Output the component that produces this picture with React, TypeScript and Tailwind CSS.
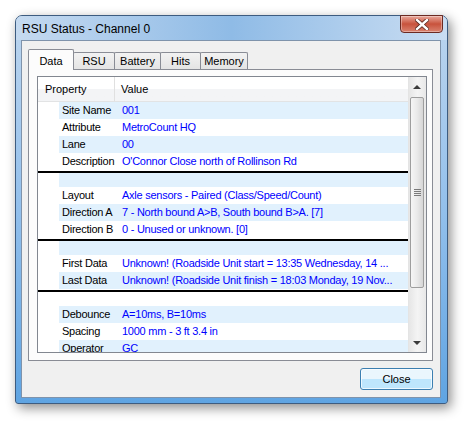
import React from "react";

type Row = { p?: string; v?: string; sep?: boolean };

const rows: Row[] = [
  { p: "Site Name", v: "001" },
  { p: "Attribute", v: "MetroCount HQ" },
  { p: "Lane", v: "00" },
  { p: "Description", v: "O'Connor Close north of Rollinson Rd" },
  { sep: true },
  { p: "Layout", v: "Axle sensors - Paired (Class/Speed/Count)" },
  { p: "Direction A", v: "7 - North bound A>B, South bound B>A. [7]" },
  { p: "Direction B", v: "0 - Unused or unknown. [0]" },
  { sep: true },
  { p: "First Data", v: "Unknown! (Roadside Unit start = 13:35 Wednesday, 14 ..." },
  { p: "Last Data", v: "Unknown! (Roadside Unit finish = 18:03 Monday, 19 Nov..." },
  { sep: true },
  { p: "Debounce", v: "A=10ms, B=10ms" },
  { p: "Spacing", v: "1000 mm - 3 ft 3.4 in" },
  { p: "Operator", v: "GC" },
];

const tabs = ["RSU", "Battery", "Hits", "Memory"];
const tabWidths = ["w-[42px]", "w-[47px]", "w-[41px]", "w-[48px]"];

function ListRow({ row, index }: { row: Row; index: number }) {
  const blue = index % 2 === 0 ? "bg-[#e1f1fd]" : "bg-white";
  if (row.sep) {
    return (
      <div className="flex h-[17px] shrink-0 flex-col bg-white">
        <div className="mt-[1px] h-[2px] w-full bg-black" />
        <div className="flex flex-1">
          <div className="w-[21px]" />
          <div className={`flex-1 ${blue}`} />
        </div>
      </div>
    );
  }
  return (
    <div className="flex h-[17px] shrink-0 bg-white tracking-[-0.25px]">
      <div className="w-[21px]" />
      <div className={`flex flex-1 items-center ${blue}`}>
        <div className="w-[56px] whitespace-nowrap pl-[3px] text-black">{row.p}</div>
        <div className="flex-1 overflow-hidden whitespace-nowrap pl-[7px] text-[#0000ff]">{row.v}</div>
      </div>
    </div>
  );
}

function ScrollBar() {
  return (
    <div className="flex w-[18px] flex-col border-l border-[#e4e4e4] bg-gradient-to-r from-[#e6e6e6] via-[#f4f4f4] to-[#e8e8e8] py-[1px] pr-[1px]">
      <div className="flex h-[17px] items-center justify-center">
        <div className="h-0 w-0 border-x-[4px] border-b-[4px] border-x-transparent border-b-[#3b3b3b]" />
      </div>
      <div className="mx-[1px] mt-[2px] flex h-[191px] items-center justify-center rounded-[2px] border border-[#9e9e9e] bg-gradient-to-r from-[#f6f6f6] via-[#eaeaea] to-[#d6d6d6]">
        <div className="flex flex-col gap-[1px]">
          <div className="h-[1px] w-[7px] bg-[#7a7a7a]" />
          <div className="h-[1px] w-[7px] bg-[#7a7a7a]" />
          <div className="h-[1px] w-[7px] bg-[#7a7a7a]" />
          <div className="h-[1px] w-[7px] bg-[#7a7a7a]" />
        </div>
      </div>
      <div className="flex-1" />
      <div className="flex h-[17px] items-center justify-center">
        <div className="h-0 w-0 border-x-[4px] border-t-[4px] border-x-transparent border-t-[#3b3b3b]" />
      </div>
    </div>
  );
}

export default function App() {
  return (
    <div className="h-[423px] w-[466px] overflow-hidden bg-white pl-[15px] pt-[15px] font-['Liberation_Sans',Arial,sans-serif] text-[11px]">
      <div className="flex h-[389px] w-[433px] flex-col rounded-t-[7px] rounded-b-[3px] border border-[#3d5c80] bg-gradient-to-b from-[#bcd5ee] via-[#93c0ec] to-[#5fa4e2] shadow-[3px_4px_12px_rgba(0,0,0,0.45)]">
        <div className="relative flex h-[24px] shrink-0 items-center rounded-t-[6px] bg-gradient-to-r from-[#c5daf0] via-[#8fbbe6] to-[#c9ddf2] pl-[6px]">
          <span className="pt-[1px] text-[12px] text-black">RSU Status - Channel 0</span>
          <div className="absolute right-[4px] top-[-1px] flex h-[18px] w-[43px] items-center justify-center rounded-b-[4px] border border-[#6b2a22] bg-gradient-to-b from-[#e8a89c] via-[#c8523c] to-[#d9826f] shadow-[inset_0_0_0_1px_rgba(255,255,255,0.35)]">
            <svg width="14" height="11" viewBox="0 0 14 11">
              <path d="M2 1 L12 10 M12 1 L2 10" stroke="#5a2a22" strokeWidth="4" strokeLinecap="square" />
              <path d="M2 1 L12 10 M12 1 L2 10" stroke="#ffffff" strokeWidth="2.4" strokeLinecap="square" />
            </svg>
          </div>
        </div>
        <div className="mb-[5px] ml-[5px] mr-[6px] flex flex-1 flex-col border border-[#7f93ab] bg-[#f0f0f0] px-[6px] pt-[8px]">
          <div className="flex h-[21px] items-end">
            <div className="relative z-10 flex h-[21px] w-[46px] items-start justify-center rounded-t-[2px] border border-b-0 border-[#898c95] bg-[#fcfcfc] pt-[3px]">
              Data
            </div>
            {tabs.map((t, i) => (
              <div
                key={t}
                className={`-ml-[1px] flex h-[18px] ${tabWidths[i]} items-center justify-center rounded-t-[2px] border border-b-0 border-[#898c95] bg-gradient-to-b from-[#f2f2f2] to-[#e3e3e3]`}
              >
                {t}
              </div>
            ))}
          </div>
          <div className="-mt-[1px] mr-[1px] flex h-[292px] flex-col border border-[#898c95] bg-[#fcfcfc] pb-[7px] pl-[8px] pr-[5px] pt-[6px]">
            <div className="flex flex-1 overflow-hidden border border-[#828790] bg-white">
              <div className="flex w-[370px] flex-col overflow-hidden">
                <div className="flex h-[25px] shrink-0 border-b border-[#e2e3e4] bg-gradient-to-b from-white from-50% to-[#f3f4f6] to-50%">
                  <div className="flex w-[77px] items-center border-r border-[#e0e0e0] pl-[7px] pt-[1px]">Property</div>
                  <div className="flex items-center pl-[6px] pt-[1px]">Value</div>
                </div>
                {rows.map((r, i) => (
                  <ListRow key={i} row={r} index={i} />
                ))}
              </div>
              <ScrollBar />
            </div>
          </div>
          <div className="mr-[1px] mt-[7px] flex justify-end">
            <div className="flex h-[22px] w-[73px] items-center justify-center rounded-[3px] border border-[#3c7fb1] bg-gradient-to-b from-[#eaf6fd] from-50% to-[#bee6fd] to-50% text-black shadow-[inset_0_0_0_1px_rgba(255,255,255,0.7)]">
              Close
            </div>
          </div>
        </div>
      </div>
    </div>
  );
}
